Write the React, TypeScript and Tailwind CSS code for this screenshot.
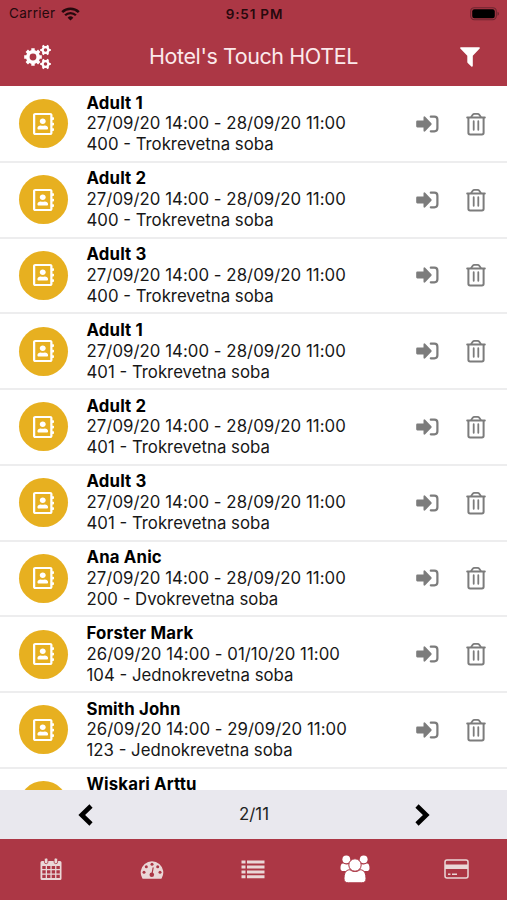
import React from "react";
import { FaRegAddressBook } from "react-icons/fa";

type Guest = {
  name: string;
  dates: string;
  room: string;
};

const guests: Guest[] = [
  { name: "Adult 1", dates: "27/09/20 14:00 - 28/09/20 11:00", room: "400 - Trokrevetna soba" },
  { name: "Adult 2", dates: "27/09/20 14:00 - 28/09/20 11:00", room: "400 - Trokrevetna soba" },
  { name: "Adult 3", dates: "27/09/20 14:00 - 28/09/20 11:00", room: "400 - Trokrevetna soba" },
  { name: "Adult 1", dates: "27/09/20 14:00 - 28/09/20 11:00", room: "401 - Trokrevetna soba" },
  { name: "Adult 2", dates: "27/09/20 14:00 - 28/09/20 11:00", room: "401 - Trokrevetna soba" },
  { name: "Adult 3", dates: "27/09/20 14:00 - 28/09/20 11:00", room: "401 - Trokrevetna soba" },
  { name: "Ana Anic", dates: "27/09/20 14:00 - 28/09/20 11:00", room: "200 - Dvokrevetna soba" },
  { name: "Forster Mark", dates: "26/09/20 14:00 - 01/10/20 11:00", room: "104 - Jednokrevetna soba" },
  { name: "Smith John", dates: "26/09/20 14:00 - 29/09/20 11:00", room: "123 - Jednokrevetna soba" },
  { name: "Wiskari Arttu", dates: "", room: "" },
];

const WifiIcon = () => (
  <svg width="19" height="14" viewBox="0 0 19 14" fill="none" stroke="currentColor">
    <path d="M1.2 5.2a11.8 11.8 0 0 1 16.6 0" strokeWidth="2.5" />
    <path d="M4.1 8.3a7.6 7.6 0 0 1 10.8 0" strokeWidth="2.3" />
    <path d="M9.5 13.6 6.6 10.7a4.1 4.1 0 0 1 5.8 0z" fill="currentColor" stroke="none" />
  </svg>
);

const BatteryIcon = () => (
  <svg width="30" height="14" viewBox="0 0 30 14">
    <rect x="0.7" y="0.7" width="25.6" height="12" rx="3.6" fill="none" stroke="#6e2630" strokeWidth="1.1" />
    <rect x="2.2" y="2.2" width="22.6" height="9" rx="2.2" fill="#000" />
    <path d="M27.5 4.7v4c2-.7 2-3.3 0-4z" fill="#6e2630" />
  </svg>
);

const bigTeeth = [0, 45, 90, 135];
const smallTeeth = [0, 60, 120];

const GearsIcon = () => (
  <svg width="28" height="26" viewBox="0 0 28 26" fill="none" stroke="currentColor">
    <circle cx="9" cy="13" r="5.2" strokeWidth="3.6" />
    {bigTeeth.map((a) => (
      <g key={a} transform={`rotate(${a} 9 13)`}>
        <path d="M9 4.200v3.500M9 18.300v3.500" strokeWidth="3.400" />
      </g>
    ))}
    {[6, 20].map((cy) => (
      <g key={cy}>
        <circle cx="21.500" cy={cy} r="2.900" strokeWidth="2.300" />
        {smallTeeth.map((a) => (
          <g key={a} transform={`rotate(${a + 30} 21.5 ${cy})`}>
            <path d={`M21.500 ${cy - 5.3}v2.300M21.500 ${cy + 3}v2.300`} strokeWidth="2.200" />
          </g>
        ))}
      </g>
    ))}
  </svg>
);

const FilterIcon = () => (
  <svg width="20" height="20" viewBox="0 0 20 20" fill="currentColor">
    <path d="M.8.300h18.400q1 .3.500 1.300L12.800 8.800v10q-.3 1.300-1.500.7L7.700 16q-.4-.4-.4-1V8.800L.3 1.600Q-.2.600.8.300z" />
  </svg>
);

const SignInIcon = () => (
  <svg width="23" height="18" viewBox="0 0 23 18">
    <path
      d="M1.300 5.500h6.200V2.200q.4-1.500 1.700-.5l6.200 6.500q.6.800 0 1.600l-6.200 6.500q-1.300 1-1.700-.5v-3.300H1.300Q.2 12.300.2 11.300V6.700q0-1.200 1.100-1.200z"
      fill="currentColor"
    />
    <path d="M14.800 1.700h3.600q3 0 3 3v8.600q0 3-3 3h-3.600" fill="none" stroke="currentColor" strokeWidth="2.200" strokeLinecap="round" />
  </svg>
);

const TrashIcon = () => (
  <svg width="20" height="24" viewBox="0 0 20 24" fill="none" stroke="currentColor" strokeLinecap="round">
    <path d="M1.200 5.500h17.600" strokeWidth="2" />
    <path d="M5.200 5 6.500 3Q7.300 1.900 8.500 1.900h3q1.200 0 2 1.100l1.300 2" strokeWidth="1.800" />
    <path d="M2.400 6v14.700q0 1.700 1.700 1.700h11.800q1.700 0 1.700-1.700V6" strokeWidth="2" />
    <path d="M7.700 9.200v8.600M12.300 9.200v8.600" strokeWidth="1.800" />
  </svg>
);

const CalendarIcon = () => (
  <svg width="22" height="24" viewBox="0 0 22 24" fill="currentColor">
    <path
      fillRule="evenodd"
      d="M2 4h18q1.5 0 1.5 1.5v16Q21.500 23 20 23H2Q.5 23 .5 21.500v-16Q.5 4 2 4zM2.300 9v3h3.400V9zm4.700 0v3h3.400V9zm4.700 0v3h3.400V9zm4.700 0v3h3.400V9zM2.300 13.300v3.200h3.400v-3.200zm4.700 0v3.200h3.400v-3.200zm4.700 0v3.200h3.400v-3.200zm4.700 0v3.200h3.400v-3.200zM2.300 17.800v3.300h3.400v-3.300zm4.700 0v3.300h3.400v-3.300zm4.700 0v3.300h3.400v-3.300zm4.700 0v3.300h3.400v-3.300z"
    />
    <g stroke="#ac3745" strokeWidth=".8">
      <rect x="4.400" y=".9" width="3.500" height="5.800" rx="1.700" />
      <rect x="14.100" y=".9" width="3.500" height="5.800" rx="1.700" />
    </g>
  </svg>
);

const GaugeIcon = () => (
  <svg width="24" height="19" viewBox="0 0 24 19">
    <path d="M2.300 18.300A11.300 11.300 0 1 1 21.700 18.300q-.4.500-1 .5H3.300q-.6 0-1-.5z" fill="currentColor" />
    <g fill="#ac3745">
      <circle cx="4" cy="12.300" r="1.500" />
      <circle cx="6.300" cy="6.800" r="1.500" />
      <circle cx="12" cy="4.300" r="1.500" />
      <circle cx="17.700" cy="6.800" r="1.500" />
      <circle cx="20" cy="12.300" r="1.500" />
      <circle cx="11.800" cy="14.800" r="2.300" />
    </g>
    <path d="m12 14.200 1.100-6.400" stroke="#ac3745" strokeWidth="1.200" strokeLinecap="round" />
  </svg>
);

const ListIcon = () => (
  <svg width="24" height="19" viewBox="0 0 24 19" fill="currentColor">
    <path d="M.5.500h4v3h-4zM6 .500h17.500v3H6zM.5 5.500h4v3h-4zM6 5.500h17.500v3H6zM.5 10.400h4v3h-4zM6 10.400h17.500v3H6zM.5 15.300h4v3h-4zM6 15.300h17.500v3H6z" />
  </svg>
);

const GroupIcon = () => (
  <svg width="30" height="28" viewBox="0 0 30 28" fill="currentColor">
    <circle cx="6.300" cy="4.300" r="3.900" />
    <circle cx="23.700" cy="4.300" r="3.900" />
    <path d="M3.300 8.500c3 1.600 4.700 1.200 6.400.3V16H3.200Q.5 16 .5 13.200C.5 10.500 1 8.300 3.300 8.500zM26.700 8.500c-3 1.600-4.700 1.200-6.400.3V16h6.500q2.700 0 2.700-2.800c0-2.700-.5-4.900-2.800-4.700z" />
    <g stroke="#ac3745" strokeWidth="1">
      <path d="M9.500 14.800C5.500 14.800 4 19 4 23.800q0 4 4.300 4h13.400q4.300 0 4.300-4c0-4.800-1.500-9-5.500-9-1 0-2.300 1.700-5.500 1.700s-4.500-1.700-5.500-1.700z" />
      <circle cx="15" cy="10" r="6.200" />
    </g>
  </svg>
);

const CardIcon = () => (
  <svg width="25" height="20" viewBox="0 0 25 20">
    <rect x="1" y="1" width="23" height="18" rx="2" fill="none" stroke="currentColor" strokeWidth="1.500" />
    <path d="M1 5.600h23v4.300H1zM4 14.600h2.500v1.500H4zM8 14.600h5v1.500H8z" fill="currentColor" />
  </svg>
);

const GuestRow = ({ guest }: { guest: Guest }) => (
  <li className="flex h-[75.75px] shrink-0 items-center border-b-2 border-[#ededee] pl-[19px] pr-[21px]">
    <div className="flex size-[49px] shrink-0 items-center justify-center rounded-full bg-[#e7b020] text-white">
      <FaRegAddressBook className="h-[22px] w-[21px]" preserveAspectRatio="none" />
    </div>
    <div className="ml-[18.5px] flex-1 whitespace-nowrap text-[16.8px] leading-[20.8px] text-[#171717]">
      <p className="h-[20.8px] font-bold tracking-[0.16px] text-black">{guest.name}</p>
      <p className="h-[20.8px] tracking-[0.04px]">{guest.dates}</p>
      <p className="h-[20.8px]">{guest.room}</p>
    </div>
    <div className="flex items-center gap-[27px] text-[#7c7c7c]">
      <SignInIcon />
      <TrashIcon />
    </div>
  </li>
);

const App: React.FC = () => {
  return (
    <div className="flex h-[900px] w-[507px] flex-col overflow-hidden bg-white font-['Inter','Liberation_Sans',sans-serif]">
      <header className="h-[86px] shrink-0 bg-[#ac3745]">
        {/* Status bar */}
        <div className="grid h-7 grid-cols-3 items-center pl-[9px] pr-[7px] text-[13.5px] text-[#26090d]">
          <div className="flex items-center gap-1.5 pb-px">
            <span className="tracking-[0.3px]">Carrier</span>
            <WifiIcon />
          </div>
          <span className="text-center font-semibold tracking-[0.8px]">9:51 PM</span>
          <div className="flex justify-end pb-px">
            <BatteryIcon />
          </div>
        </div>
        {/* Title bar */}
        <div className="flex h-[57px] items-center justify-between pl-6 pr-[27px] text-white">
          <GearsIcon />
          <h1 className="mr-[5px] text-[21.5px] tracking-[-0.42px] text-[#fbe9eb]">Hotel's Touch HOTEL</h1>
          <FilterIcon />
        </div>
      </header>

      <ul className="flex min-h-0 flex-1 flex-col overflow-hidden pt-px">
        {guests.map((guest, i) => (
          <GuestRow key={i} guest={guest} />
        ))}
      </ul>

      {/* Pagination */}
      <div className="flex h-[49px] shrink-0 items-center justify-between bg-[#e9e8ee] pl-[78px] pr-[77px] text-black">
        <svg width="15" height="22" viewBox="0 0 15 22" fill="none" stroke="currentColor" strokeWidth="4.600">
          <path d="M13 2 3.700 11 13 20" />
        </svg>
        <span className="text-[16.8px] text-[#222]">2/11</span>
        <svg width="15" height="22" viewBox="0 0 15 22" fill="none" stroke="currentColor" strokeWidth="4.600">
          <path d="m2 2 9.300 9L2 20" />
        </svg>
      </div>

      <nav className="grid h-[61px] shrink-0 grid-cols-5 items-center justify-items-center bg-[#ac3745] pb-px text-[#ead7d7]">
        <CalendarIcon />
        <GaugeIcon />
        <ListIcon />
        <span className="text-white">
          <GroupIcon />
        </span>
        <CardIcon />
      </nav>
    </div>
  );
};

export default App;
